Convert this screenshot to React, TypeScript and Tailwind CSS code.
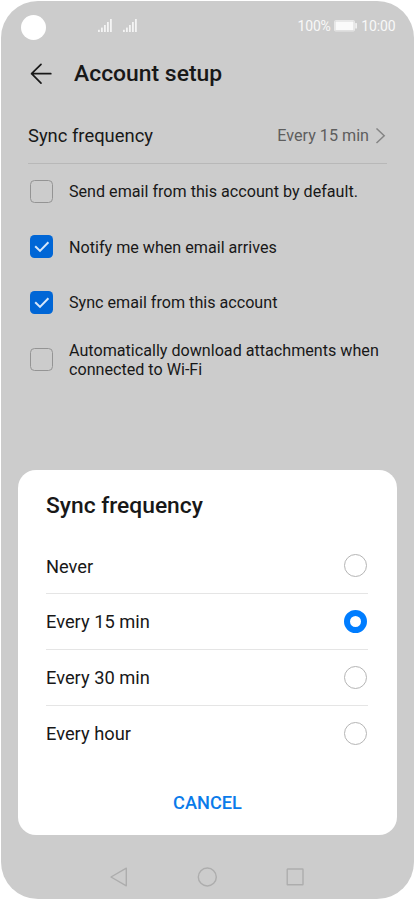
function Signal() {
  return (
    <svg width="14" height="14" viewBox="0 0 14 14" fill="#f4f4f4">
      <rect x="0" y="10.8" width="1.8" height="2.2" />
      <rect x="3" y="8.6" width="1.8" height="4.4" />
      <rect x="6" y="6" width="1.8" height="7" />
      <rect x="9" y="3" width="1.8" height="10" />
      <rect x="12" y="0" width="1.8" height="13" />
    </svg>
  );
}

function StatusBar() {
  return (
    <div className="flex h-[49px] items-start pl-[19.5px] pr-[18.5px]">
      <div className="mt-[14px] size-[25px] rounded-full bg-white" />
      <div className="ml-[52.5px] mt-[18px] flex gap-[11px]">
        <Signal />
        <Signal />
      </div>
      <div className="ml-auto mt-[15px] flex h-5 items-center text-[14px] text-[#f8f8f8]">
        <span className="tracking-[-0.2px]">100%</span>
        <svg className="ml-[3.5px] mr-[3px]" width="24" height="12" viewBox="0 0 24 12">
          <rect x="0.5" y="0.5" width="20" height="10.5" rx="1" fill="#d8d8d8" stroke="#e8e8e8" />
          <rect x="1.5" y="1.5" width="18" height="8.5" fill="#fafafa" />
          <rect x="21.3" y="3" width="1.6" height="5.5" rx="0.6" fill="#f4f4f4" />
        </svg>
        <span className="tracking-[-0.1px]">10:00</span>
      </div>
    </div>
  );
}

function CheckRow({ label, checked, height, nudge }: { label: string; checked: boolean; height: string; nudge: string }) {
  return (
    <div className={`flex items-center ${height}`}>
      {checked ? (
        <div className="flex size-[23px] items-center justify-center rounded-[4.5px] bg-[#0066d6]">
          <svg width="23" height="23" viewBox="0 0 23 23" fill="none">
            <path d="M5.2 11.2 L10 15.9 L18.4 7.3" stroke="#d7e7fa" strokeWidth="2" />
          </svg>
        </div>
      ) : (
        <div className="size-[23px] rounded-[4.5px] border border-[#949494]" />
      )}
      <div className={`ml-[16px] w-[330px] text-[16.14px] leading-[19px] ${nudge}`}>{label}</div>
    </div>
  );
}

const checks = [
  { label: "Send email from this account by default.", checked: false, height: "h-[54px]", nudge: "pt-px" },
  { label: "Notify me when email arrives", checked: true, height: "h-[57px]", nudge: "pt-px" },
  { label: "Sync email from this account", checked: true, height: "h-[54px]", nudge: "pt-px" },
  { label: "Automatically download attachments when connected to Wi-Fi", checked: false, height: "h-[60px]", nudge: "pt-[2px]" },
];

const options = ["Never", "Every 15 min", "Every 30 min", "Every hour"];

function Dialog() {
  return (
    <div className="mx-[17px] h-[365px] rounded-[18px] bg-white pl-[28px] pr-[29px] pt-[21px]">
      <h2 className="h-[47px] text-[22.8px] font-medium leading-[30px]">Sync frequency</h2>
      {options.map((o, i) => (
        <div
          key={o}
          className={`flex h-[56px] items-center justify-between border-b pr-px text-[18.3px] ${i < 3 ? "border-[#e5e5e5]" : "border-transparent"}`}
        >
          <span className={i === 0 ? "pt-[2px]" : "pt-px"}>{o}</span>
          {i === 1 ? (
            <span className="size-[23px] rounded-full border-[6px] border-[#007dff]" />
          ) : (
            <span className="size-[23px] rounded-full border border-[#b5b5b5]" />
          )}
        </div>
      ))}
      <div className="mt-[30px] pl-px text-center text-[18.2px] font-medium leading-[22px] text-[#0a7bea]">CANCEL</div>
    </div>
  );
}

export default function App() {
  return (
    <div className="h-[900px] w-[415px] overflow-hidden bg-white p-px font-['Roboto',sans-serif] text-[#181818]">
      <div className="flex h-[898px] w-[413px] flex-col rounded-[37px] bg-[#cccccc]">
        <StatusBar />
        <header className="flex h-[47px] items-center pl-[29px]">
          <svg width="22" height="22" viewBox="0 0 22 22" fill="none" stroke="#181818" strokeWidth="1.7" strokeLinecap="round" strokeLinejoin="round">
            <path d="M20.8 10.7 H1.6 M11 1.3 L1.6 10.7 L11 20.1" />
          </svg>
          <h1 className="ml-[22px] pt-[2px] text-[22.9px] font-medium">Account setup</h1>
        </header>
        <div className="mx-[27px] flex h-[67px] items-center border-b border-[#b8b8b8] pt-[12px]">
          <span className="text-[18.4px]">Sync frequency</span>
          <span className="ml-auto text-[16.15px] text-[#5e5e5e]">Every 15 min</span>
          <svg className="ml-[6px] mr-px" width="11" height="17" viewBox="0 0 11 17" fill="none" stroke="#858585" strokeWidth="1.5">
            <path d="M1.5 0.5 L9.2 7.7 L1.5 15" />
          </svg>
        </div>
        <div className="pl-[29px]">
          {checks.map((c) => (
            <CheckRow key={c.label} {...c} />
          ))}
        </div>
        <div className="h-[81px]" />
        <Dialog />
        <nav className="mt-[31.5px] flex items-center pl-[108px]">
          <svg width="19" height="20" viewBox="0 0 19 20" fill="none" stroke="#adadad" strokeWidth="1.4" strokeLinejoin="round">
            <path d="M17.3 1.2 V18.8 L2 10 Z" />
          </svg>
          <svg className="ml-[69px]" width="20" height="20" viewBox="0 0 20 20" fill="none" stroke="#adadad" strokeWidth="1.4">
            <circle cx="10.3" cy="10" r="9" />
          </svg>
          <svg className="ml-[69px]" width="18" height="18" viewBox="0 0 18 18" fill="none" stroke="#adadad" strokeWidth="1.4">
            <rect x="1.2" y="1" width="15.8" height="15.8" rx="0.5" />
          </svg>
        </nav>
      </div>
    </div>
  );
}
